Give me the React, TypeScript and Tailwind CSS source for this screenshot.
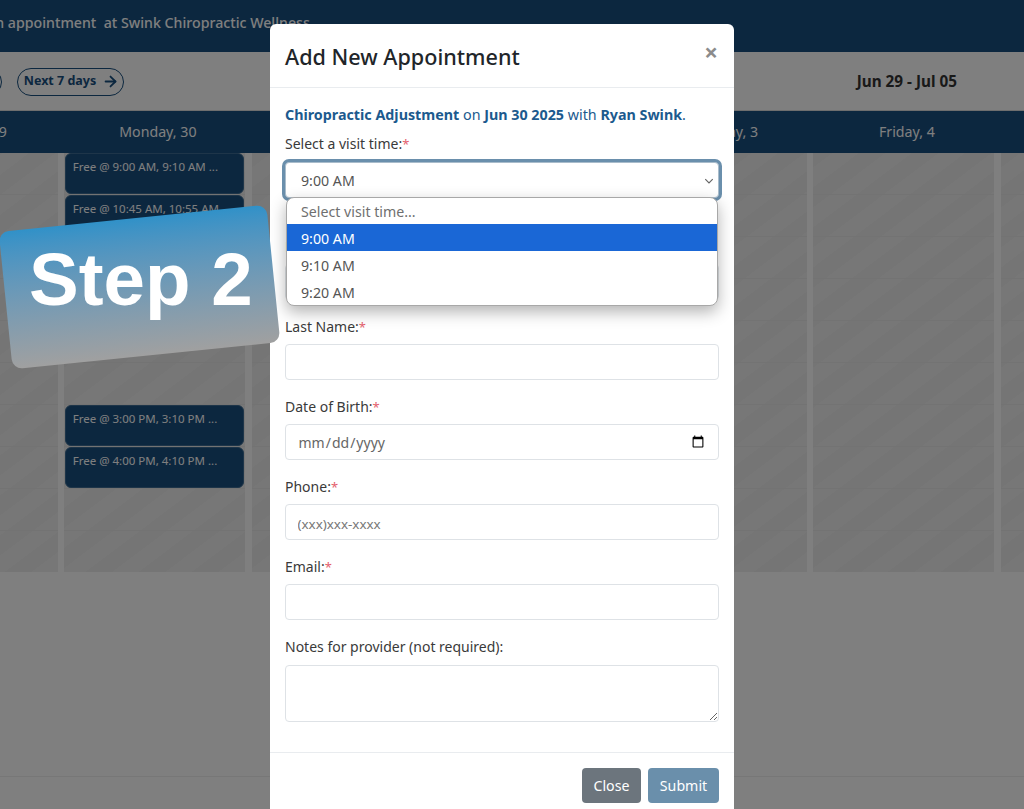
import { ArrowRight } from "lucide-react"

const font = "font-['Noto_Sans',sans-serif]"

const days = ["Sunday, 29", "Monday, 30", "Tuesday, 1", "Wednesday, 2", "Thursday, 3", "Friday, 4", "Saturday, 5"]

const slotsMonday: Record<number, string> = {
  0: "Free @ 9:00 AM, 9:10 AM ...",
  1: "Free @ 10:45 AM, 10:55 AM ...",
  6: "Free @ 3:00 PM, 3:10 PM ...",
  7: "Free @ 4:00 PM, 4:10 PM ...",
}

const rows = [0, 1, 2, 3, 4, 5, 6, 7, 8, 9]

function Schedule() {
  return (
    <div className="flex flex-col h-[809px] bg-white overflow-hidden">
      <div className="h-[52px] bg-[#184e7e] shrink-0 flex items-start pt-[11px] overflow-hidden">
        <div className="text-white text-[14.2px] font-medium leading-[24px] whitespace-pre ml-[-78px]">
          Schedule an appointment  at Swink Chiropractic Wellness
        </div>
      </div>

      <div className="h-[59px] shrink-0 flex items-center justify-between pt-[1px] pr-[67px] border-b border-[#ddd]">
        <div className="flex items-center gap-[15px] ml-[-98px]">
          <div className="w-[100px] h-[28px] rounded-full border border-[#184e7e]" />
          <div className="h-[28px] w-[107px] rounded-full border border-[#184e7e] flex items-center justify-center gap-[6px] pl-[2px] text-[#184e7e] text-[12.5px] font-bold">
            Next 7 days
            <ArrowRight size={17} strokeWidth={2.5} />
          </div>
        </div>
        <div className="font-bold text-[15.3px] text-[#333]">Jun 29 - Jul 05</div>
      </div>

      <div className="h-[42px] shrink-0 bg-[#184e7e] grid grid-cols-[repeat(7,187.25px)] ml-[-123px] items-center">
        {days.map((d) => (
          <div key={d} className="text-center text-white text-[14.2px]">{d}</div>
        ))}
      </div>

      <div className="h-[419px] shrink-0 grid grid-cols-[repeat(7,181px)] gap-x-[6.25px] ml-[-123px] bg-white overflow-hidden">
        {days.map((d, c) => (
          <div
            key={d}
            className="h-[419px] bg-[repeating-linear-gradient(-37deg,#eeeeee_0,#eeeeee_16px,#ebebeb_16px,#ebebeb_32px)]"
          >
            {rows.map((r) => (
              <div key={r} className="h-[42px] border-b border-[#e7e7e7] relative">
                {c === 1 && slotsMonday[r] && (
                  <div className="h-[41px] mx-[1px] rounded-[6px] bg-[#184e7e] border border-[#3d6b92] pl-[6.5px] pt-[4px] text-[11.5px] leading-[18px] text-white whitespace-nowrap overflow-hidden">
                    {slotsMonday[r]}
                  </div>
                )}
              </div>
            ))}
          </div>
        ))}
      </div>

      <div className="h-[205px] shrink-0 border-b border-[#eee]" />
    </div>
  )
}

function Req() {
  return <span className="text-[#e4606d] text-[13px]">*</span>
}

function Field({ label, required, children }: any) {
  return (
    <div className="mb-[15px]">
      <div className="h-[22px] leading-[24px] mb-[7px] text-[14px] text-[#3a3a3a]">
        {label}
        {required && <Req />}
      </div>
      {children}
    </div>
  )
}

const inputClass =
  "block w-full h-[36px] rounded-[4px] border border-[#dee2e6] bg-white px-[11.5px] pt-[2px] text-[14px] text-[#666] outline-none placeholder:text-[13.4px] placeholder:text-[#777]"

function Dropdown() {
  return (
    <div className="absolute left-[16px] top-[173px] w-[432px] h-[109px] rounded-[8px] border border-[#a8a8a8] bg-white overflow-hidden shadow-[0_6px_16px_rgba(0,0,0,0.3)] text-[14.2px] text-[#555]">
      <div className="h-[26px] leading-[27px] pl-[14px] text-[#6f6f6f]">Select visit time...</div>
      <div className="h-[27px] leading-[29px] pl-[14px] bg-[#1a67d6] text-white">9:00 AM</div>
      <div className="h-[27px] leading-[29px] pl-[14px]">9:10 AM</div>
      <div className="h-[27px] leading-[29px] pl-[14px]">9:20 AM</div>
    </div>
  )
}

function Modal() {
  return (
    <div className="absolute left-[270px] top-[24px] w-[464px] bottom-0 bg-white rounded-t-[6px] overflow-hidden">
      <div className="h-[64px] border-b border-[#e9ecef] flex items-start justify-between px-[15px] pt-[16px]">
        <h2 className="text-[21.6px] leading-[34px] font-medium text-[#212529]">Add New Appointment</h2>
        <div className="text-[24px] leading-[24px] font-bold text-[#8c8c8c] mr-[1px]">×</div>
      </div>

      <div className="px-[15px] pt-[15px] pb-[30px]">
        <p className="h-[22px] leading-[24px] mb-[8px] text-[14.3px] text-[#1c5a8e]">
          <b className="font-bold">Chiropractic Adjustment</b> on <b className="font-bold">Jun 30 2025</b> with <b className="font-bold">Ryan Swink</b>.
        </p>

        <div className="mb-[37px]">
          <div className="h-[22px] leading-[22px] mb-[7px] text-[14px] text-[#3a3a3a]">
            Select a visit time:<Req />
          </div>
          <div className="h-[36px] rounded-[4px] border border-[#a9bccb] bg-white shadow-[0_0_0_3px_#6a8fac] flex items-center justify-between pl-[15px] pr-[3px] pt-[1px] text-[14.2px] text-[#555]">
            9:00 AM
            <svg width="12" height="12" viewBox="0 0 16 16" fill="none" stroke="#666" strokeWidth="1.6">
              <path d="M3 5.5l5 5 5-5" />
            </svg>
          </div>
        </div>

        <Field label="First Name:" required>
          <input className={inputClass} />
        </Field>
        <Field label="Last Name:" required>
          <input className={inputClass} />
        </Field>
        <Field label="Date of Birth:" required>
          <input type="date" className={`${inputClass} !pt-[0px]`} />
        </Field>
        <Field label="Phone:" required>
          <input className={inputClass} placeholder="(xxx)xxx-xxxx" />
        </Field>
        <Field label="Email:" required>
          <input className={inputClass} />
        </Field>
        <div>
          <div className="h-[22px] leading-[24px] mb-[8px] text-[14px] text-[#3a3a3a]">Notes for provider (not required):</div>
          <textarea className="block w-full h-[57px] rounded-[4px] border border-[#dee2e6] bg-white outline-none" />
        </div>
      </div>

      <div className="border-t border-[#e9ecef] pt-[15px] pr-[15px] flex justify-end gap-[7px]">
        <button className="w-[59px] h-[35px] rounded-[4px] bg-[#6c757d] text-white text-[14.2px]">Close</button>
        <button className="w-[71px] h-[35px] rounded-[4px] bg-[#6a8fab] text-white text-[14.2px]">Submit</button>
      </div>

      <Dropdown />
    </div>
  )
}

function StepBadge() {
  return (
    <div className="absolute left-[5px] top-[218px] w-[269px] h-[138px]">
      <div className="absolute inset-0 rounded-[10px] -rotate-[5.8deg] bg-gradient-to-b from-[#3091c8] to-[#a0a0a0]" />
      <div className="absolute left-[24px] top-[16px] text-white font-bold text-[74.5px] leading-[92px] whitespace-nowrap font-['Liberation_Sans',sans-serif]">
        Step 2
      </div>
    </div>
  )
}

export default function App() {
  return (
    <div className={`relative w-[1024px] h-[809px] overflow-hidden ${font}`}>
      <Schedule />
      <div className="absolute inset-0 bg-black/50" />
      <Modal />
      <StepBadge />
    </div>
  )
}
